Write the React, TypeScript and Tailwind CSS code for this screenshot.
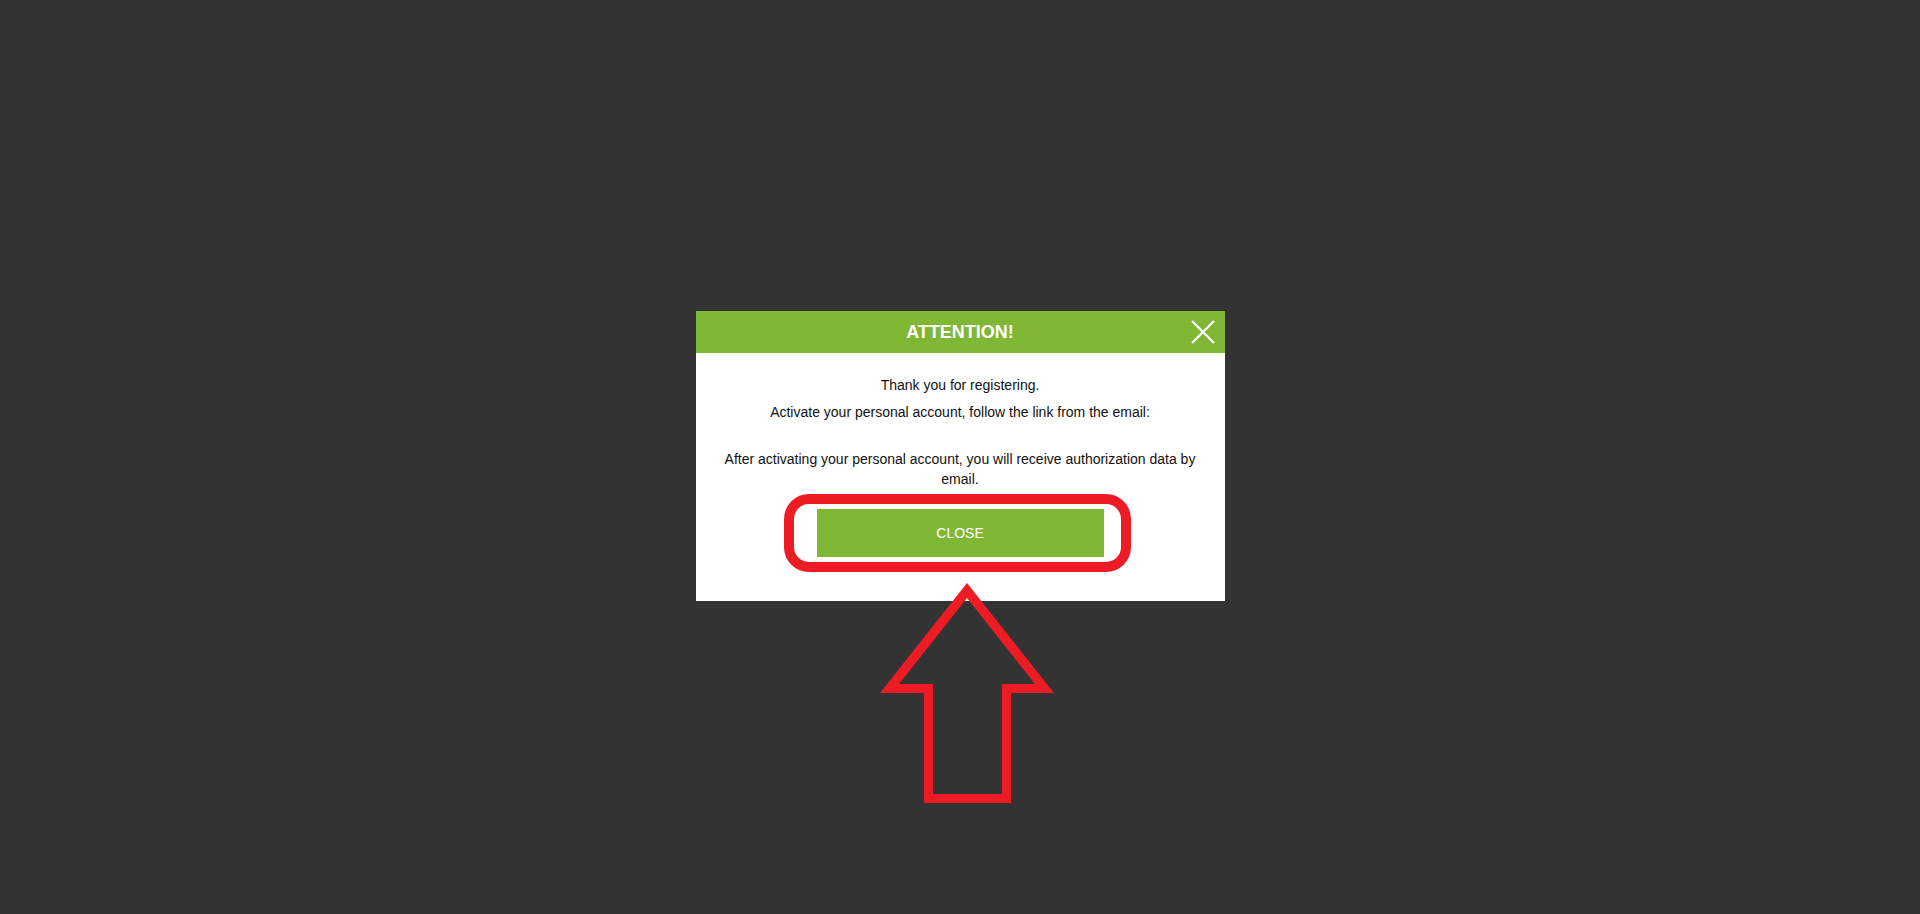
function UpArrow() {
  // outline arrow drawn as outer shape minus inner shape
  const outer = "M87 0 L174 110 L131 110 L131 220 L44 220 L44 110 L0 110 Z";
  const inner = "M87 15 L155 101 L122 101 L122 211 L53 211 L53 101 L19 101 Z";
  return (
    <svg width="174" height="220" viewBox="0 0 174 220" className="block">
      <path d={`${outer} ${inner}`} fill="#ed1c24" fillRule="evenodd" />
    </svg>
  );
}

function CloseIcon() {
  return (
    <svg width="24" height="24" viewBox="0 0 24 24" className="block">
      <path d="M1 1 L23 23 M23 1 L1 23" stroke="white" strokeWidth="2.2" fill="none" />
    </svg>
  );
}

export default function App() {
  return (
    <main className="flex h-[914px] w-full items-center justify-center bg-[#333333] font-['Liberation_Sans',Arial,sans-serif]">
      <div className="relative mb-[2px] w-[529px] bg-white">
        <div className="relative flex h-[42px] items-center justify-center bg-[#80b734]">
          <h2 className="text-[18px] font-bold text-white">ATTENTION!</h2>
          <button className="absolute right-[10px] top-[9px]">
            <CloseIcon />
          </button>
        </div>

        <div className="px-[20px] pb-[44px] pt-[22px] text-center text-[14px] leading-[20px] text-[#111]">
          <p>Thank you for registering.</p>
          <p className="mt-[7px]">Activate your personal account, follow the link from the email:</p>
          <p className="mt-[27px]">After activating your personal account, you will receive authorization data by email.</p>

          <div className="relative mx-auto mt-[20px] w-[287px]">
            <button className="flex h-[48px] w-full items-center justify-center bg-[#80b734] text-[14px] text-white">
              CLOSE
            </button>
            <div className="pointer-events-none absolute -bottom-[15px] -left-[33px] -right-[27px] -top-[15px] rounded-[25px] border-[10px] border-[#ed1c24]" />
          </div>
        </div>

        <div className="pointer-events-none absolute left-[184px] top-[272px]">
          <UpArrow />
        </div>
      </div>
    </main>
  );
}
